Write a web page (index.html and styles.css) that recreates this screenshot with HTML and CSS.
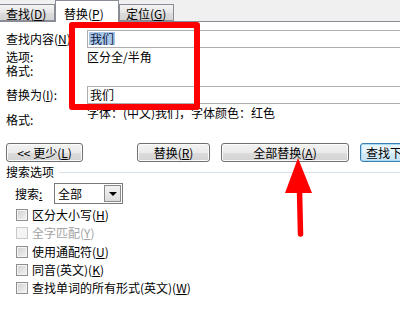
FILE: index.html
```html
<!DOCTYPE html>
<html>
<head>
<meta charset="utf-8">
<link rel="stylesheet" href="styles.css">
</head>
<body>
<div class="dialog">
  <div class="tabs">
    <div class="tab first">查找(<u>D</u>)</div>
    <div class="tab active">替换(<u>P</u>)</div>
    <div class="tab third">定位(<u>G</u>)</div>
  </div>
  <div class="main">
    <div class="row find">
      <span class="label">查找内容(<u>N</u>):</span>
      <div class="input"><span class="sel">我们</span></div>
    </div>
    <div class="row opt"><span class="label">选项:</span><span class="val">区分全/半角</span></div>
    <div class="row opt"><span class="label">格式:</span></div>
    <div class="row repl">
      <span class="label">替换为(<u>I</u>):</span>
      <div class="input">我们</div>
    </div>
    <div class="row fmt2"><span class="label low">格式:</span><span class="val">字体：(中文)我们，字体颜色：红色</span></div>
    <div class="buttons">
      <div class="btn b1">&lt;&lt; 更少(<u>L</u>)</div>
      <div class="btn b2">替换(<u>R</u>)</div>
      <div class="btn b3">全部替换(<u>A</u>)</div>
      <div class="btn b4">查找下一处(<u>F</u>)</div>
    </div>
    <div class="section"><span>搜索选项</span><div class="sep"></div></div>
    <div class="search">
      <span class="slabel">搜索<u>:</u></span>
      <div class="combo"><span class="ctext">全部</span><div class="drop"><span class="tri"></span></div></div>
    </div>
    <div class="checks">
      <div class="chk"><span class="box"></span><span>区分大小写(<u>H</u>)</span></div>
      <div class="chk dis"><span class="box"></span><span>全字匹配(<u>Y</u>)</span></div>
      <div class="chk"><span class="box"></span><span>使用通配符(<u>U</u>)</span></div>
      <div class="chk"><span class="box"></span><span>同音(英文)(<u>K</u>)</span></div>
      <div class="chk"><span class="box"></span><span>查找单词的所有形式(英文)(<u>W</u>)</span></div>
    </div>
  </div>
  <div class="redbox"></div>
  <svg class="arrow" width="40" height="90" viewBox="280 150 40 90">
    <polygon points="298,158 285,193 312,193" fill="#ff0000"/>
    <line x1="299.5" y1="190" x2="300.5" y2="234" stroke="#ff0000" stroke-width="5.5" stroke-linecap="round"/>
  </svg>
</div>
</body>
</html>
```

FILE: styles.css
```css
* { box-sizing: border-box; }
html, body {
  margin: 0;
  padding: 0;
  background: #ffffff;
}
body {
  width: 400px;
  height: 333px;
  overflow: hidden;
  font-family: "Noto Sans CJK SC", "Noto Sans", sans-serif;
  font-size: 12px;
  line-height: 14px;
  color: #000;
}
u { text-decoration: underline; text-underline-offset: 1px; }
.dialog {
  position: relative;
  width: 400px;
  height: 333px;
  overflow: hidden;
}
.tabs {
  display: flex;
  align-items: flex-end;
  height: 22px;
  background: #f0f0f0;
  border-bottom: 1px solid #898c95;
}
.tab {
  height: 17px;
  border: 1px solid #898c95;
  background: linear-gradient(#f3f3f3, #e6e6e6 50%, #dcdcdc 51%, #d4d4d4);
  padding: 2px 0 0 6px;
  line-height: 14px;
  white-space: nowrap;
}
.tab.first { margin-left: -1px; width: 56px; }
.tab.active {
  width: 64px;
  height: 22px;
  border-bottom: none;
  margin-bottom: -1px;
  background: #ffffff;
  padding: 6px 0 0 8px;
  position: relative;
  z-index: 1;
}
.tab.third { width: 55px; }
.main {
  padding-left: 6px;
}
.row {
  display: flex;
  align-items: center;
}
.label {
  width: 81px;
  flex: none;
  white-space: nowrap;
}
.find { margin-top: 8px; height: 18px; }
.input {
  flex: 1;
  height: 18px;
  border: 1px solid #abadb3;
  margin-right: -6px;
  padding-left: 1px;
  line-height: 16px;
}
.sel {
  background: #a9c6e8;
  color: #0a1a40;
  padding: 0 1px;
  display: inline-block;
  line-height: 13px;
  margin-top: 1px;
}
.opt { height: 14px; margin-top: 2px; }
.opt + .opt { margin-top: 0; }
.opt .label, .opt .val { line-height: 12px; }
.val { white-space: nowrap; }
.repl { margin-top: 8px; height: 18px; }
.repl .input { padding-left: 2px; }
.fmt2 {
  margin-top: 2px;
  height: 21px;
  align-items: flex-start;
}
.label.low { padding-top: 7px; }
.buttons {
  display: flex;
  margin-top: 16px;
  height: 19px;
}
.btn {
  height: 19px;
  border: 1px solid #707070;
  border-radius: 3px;
  background: linear-gradient(#f2f2f2, #ebebeb 50%, #dddddd 51%, #d2d2d2);
  box-shadow: inset 0 0 0 1px #fbfbfb;
  text-align: center;
  line-height: 17px;
  white-space: nowrap;
  overflow: hidden;
  flex: none;
}
.b1 { width: 77px; }
.b2 { width: 73px; margin-left: 54px; }
.b3 { width: 128px; margin-left: 11px; }
.b4 {
  width: 90px;
  margin-left: 11px;
  border-color: #3c7fb1;
  box-shadow: inset 0 0 0 1px #a8dbf6;
  background: linear-gradient(#eaf6fd, #e3f2fb 50%, #d3ebf8 51%, #c8e5f6);
  text-align: left;
  padding-left: 5px;
}
.section {
  display: flex;
  align-items: center;
  margin-top: 3px;
  height: 14px;
}
.sep {
  flex: 1;
  height: 1px;
  background: #d5dfe5;
  margin-left: 5px;
}
.search {
  display: flex;
  align-items: center;
  margin-top: 4px;
  height: 21px;
  padding-left: 9px;
}
.slabel { width: 39px; }
.combo {
  display: flex;
  width: 69px;
  height: 21px;
  border: 1px solid #7a7a7a;
  background: #fff;
}
.ctext { flex: 1; padding-left: 3px; line-height: 19px; }
.drop {
  width: 17px;
  height: 17px;
  margin: 1px;
  border: 1px solid #8a8a8a;
  background: linear-gradient(#f2f2f2, #dcdcdc);
  display: flex;
  align-items: center;
  justify-content: center;
}
.tri {
  width: 0;
  height: 0;
  border-left: 4px solid transparent;
  border-right: 4px solid transparent;
  border-top: 4px solid #000;
}
.checks {
  margin-top: 2px;
  padding-left: 10px;
}
.chk {
  display: flex;
  align-items: center;
  height: 18.3px;
  white-space: nowrap;
}
.box {
  width: 12px;
  height: 12px;
  border: 1px solid #8e8f8f;
  background: linear-gradient(135deg, #cfcfcf, #f4f4f4);
  box-shadow: inset 0 0 0 1px #f4f4f4;
  margin-right: 4px;
  flex: none;
}
.chk.dis { color: #a3a3a3; }
.chk.dis .box {
  border-color: #c9c9c9;
  background: #f4f4f4;
}
.redbox {
  position: absolute;
  left: 69px;
  top: 22px;
  width: 131px;
  height: 88px;
  border: 6px solid #ff0000;
  border-radius: 3px;
}
.arrow {
  position: absolute;
  left: 280px;
  top: 150px;
}
```
